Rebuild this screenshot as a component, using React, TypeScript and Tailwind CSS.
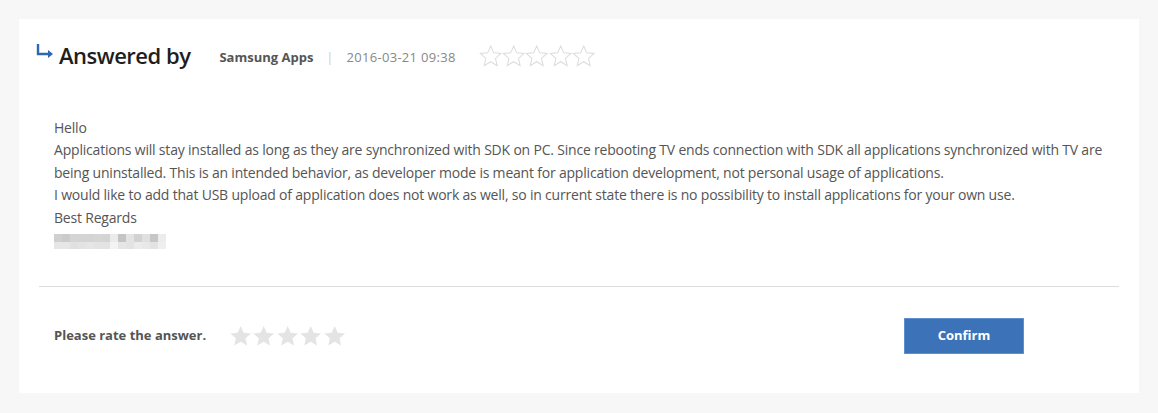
import React from 'react'

const STAR = 'M12 2.2l2.95 6.7 7.25.62-5.5 4.78 1.64 7.1L12 17.6l-6.34 3.8 1.64-7.1-5.5-4.78 7.25-.62z'

function Star({ filled }: { filled?: boolean }) {
  return (
    <svg viewBox="1.2 1.2 21.6 21.6" className="w-[23.4px] h-[22px]">
      <path
        d={STAR}
        fill={filled ? '#e4e4e4' : 'none'}
        stroke={filled ? 'none' : '#dcdcdc'}
        strokeWidth={1}
      />
    </svg>
  )
}

const PIXELS = [
  ['#d0d0d0', '#cdcbca', '#d2d6d8', '#d4d4d4', '#d4d4d4', '#d6d6d4', '#d4d4d4', '#ebebeb', '#c4c4c4', '#e3e3e3', '#d2d2d2', '#e0e0e0', '#c6c6c6', '#ececef'],
  ['#e6e6e6', '#e6e6e6', '#e0e0e0', '#e3e3e3', '#e6e6e6', '#e3e3e3', '#e3e3e3', '#f3f3f3', '#e6e6e6', '#e3e3e3', '#ebebeb', '#e8e8e8', '#e3e3e3', '#efefef'],
]

export default function App() {
  return (
    <div className="w-full h-[413px] bg-[#f7f7f7] pt-[19px] pl-[19px] font-['Open_Sans',sans-serif]">
      <div className="w-[1120px] h-[374px] bg-white flex flex-col">
        {/* header */}
        <div className="flex items-center pl-[16px] pt-[22px] h-[50px]">
          <svg viewBox="0 0 20 16" className="w-[20px] h-[16px] -mt-[8px]">
            <path d="M3 1v10h11" fill="none" stroke="#2f67b1" strokeWidth={2.4} />
            <path d="M13 7l5 4-5 4z" fill="#2f67b1" />
          </svg>
          <span className="ml-[4px] text-[22px] font-semibold text-[#1e1e1e] tracking-[-0.5px] leading-none">Answered by</span>
          <span className="ml-[29px] text-[13px] font-bold text-[#555] tracking-[0px] mt-[5px]">Samsung Apps</span>
          <span className="mx-[13px] text-[13px] text-[#ccc] mt-[5px]">|</span>
          <span className="text-[13px] text-[#888] tracking-[0.3px] mt-[5px]">2016-03-21 09:38</span>
          <div className="flex ml-[23px] mt-[2px]">
            {[0, 1, 2, 3, 4].map((i) => (
              <Star key={i} />
            ))}
          </div>
        </div>

        {/* body */}
        <div className="pl-[35px] pr-[20px] pt-[48px] text-[14px] leading-[22.4px] text-[#555] tracking-[-0.2px]">
          <p>Hello</p>
          <p className="w-[1062px]">
            Applications will stay installed as long as they are synchronized with SDK on PC. Since rebooting TV ends
            connection with SDK all applications synchronized with TV are being uninstalled. This is an intended behavior,
            as developer mode is meant for application development, not personal usage of applications.
          </p>
          <p>
            I would like to add that USB upload of application does not work as well, so in current state there is no
            possibility to install applications for your own use.
          </p>
          <p>Best Regards</p>
          <div className="mt-[5px] flex flex-col">
            {PIXELS.map((row, r) => (
              <div key={r} className="flex">
                {row.map((c, i) => (
                  <div key={i} className={r === 0 ? 'w-[8px] h-[8px]' : 'w-[8px] h-[7px]'} style={{ background: c }} />
                ))}
              </div>
            ))}
          </div>
        </div>

        <div className="mx-[20px] mt-[37px] border-t border-[#dddddd]" />

        {/* rating */}
        <div className="flex items-center pl-[35px] pt-[31px]">
          <span className="text-[13px] font-bold text-[#555] w-[176px]">Please rate the answer.</span>
          <div className="flex -ml-[1px]">
            {[0, 1, 2, 3, 4].map((i) => (
              <Star key={i} filled />
            ))}
          </div>
          <button className="ml-[558px] w-[120px] h-[36px] bg-[#3c73b8] border border-[#5e8fd0] text-white text-[13px] font-bold">
            Confirm
          </button>
        </div>
      </div>
    </div>
  )
}
